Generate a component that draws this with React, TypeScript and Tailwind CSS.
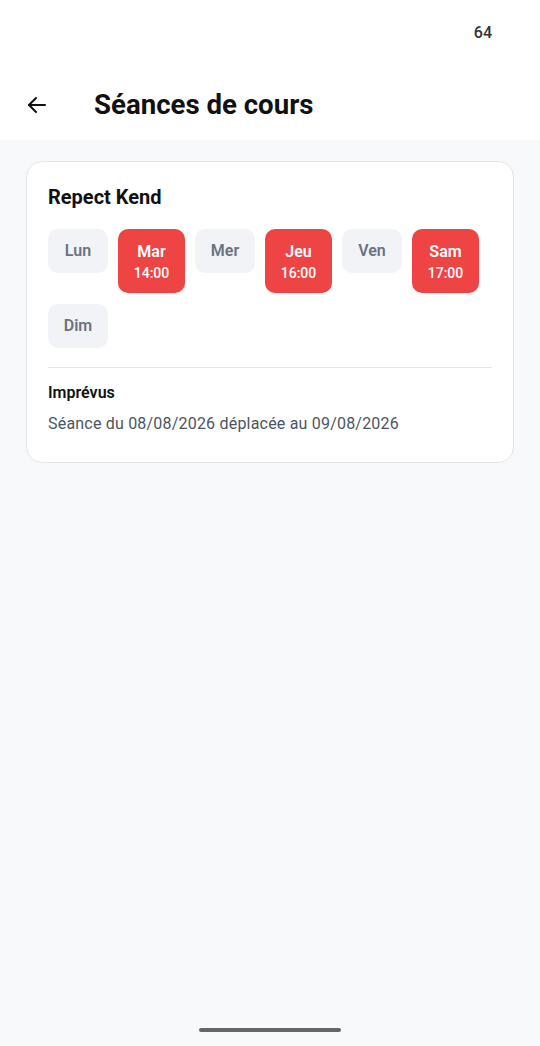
import React from 'react';

type Day = { label: string; time?: string };

const days: Day[] = [
  { label: 'Lun' },
  { label: 'Mar', time: '14:00' },
  { label: 'Mer' },
  { label: 'Jeu', time: '16:00' },
  { label: 'Ven' },
  { label: 'Sam', time: '17:00' },
  { label: 'Dim' },
];

const DayChip: React.FC<{ day: Day }> = ({ day }) => {
  if (day.time) {
    return (
      <div className="flex h-[64px] w-[67px] flex-col items-center justify-center rounded-[10px] bg-[#ef4444] pt-[2px] text-white">
        <span className="text-[16px] font-semibold leading-[20px]">{day.label}</span>
        <span className="mt-[2px] text-[14px] font-medium leading-[18px]">{day.time}</span>
      </div>
    );
  }
  return (
    <div className="flex h-[44px] w-[60px] items-center justify-center rounded-[10px] bg-[#f1f3f7] text-[16px] font-semibold text-[#6b7280]">
      {day.label}
    </div>
  );
};

export default function App() {
  return (
    <div className="flex min-h-[1046px] flex-col bg-[#f8f9fb] font-['Roboto',sans-serif]">
      {/* Header */}
      <div className="bg-white">
        <div className="flex h-[66px] items-center justify-end pr-[48px]">
          <span className="text-[16px] font-medium text-[#333]">64</span>
        </div>
        <div className="flex h-[74px] items-center pt-[4px]">
          <button className="ml-[24px] flex h-[26px] w-[26px] items-center justify-center text-[#111]">
            <svg width="24" height="24" viewBox="0 0 24 24" fill="none" stroke="currentColor" strokeWidth="2" strokeLinecap="round" strokeLinejoin="round">
              <path d="M20 12H4" />
              <path d="M11 5l-7 7 7 7" />
            </svg>
          </button>
          <h1 className="ml-[44px] text-[27.6px] font-bold text-[#111]">Séances de cours</h1>
        </div>
      </div>

      {/* Card */}
      <div className="px-[26px] pt-[21px]">
        <div className="rounded-[16px] border border-[#e3e5ea] bg-white px-[21px] pb-[28px] pt-[21px]">
          <h2 className="text-[20px] font-bold leading-[28px] text-[#111]">Repect Kend</h2>
          <div className="mt-[18px] flex flex-wrap items-start gap-x-[10px] gap-y-[11px]">
            {days.map((d) => (
              <DayChip key={d.label} day={d} />
            ))}
          </div>
          <div className="mt-[19px] border-t border-[#e3e5ea]" />
          <div className="mt-[15px] text-[16px] font-semibold leading-[20px] text-[#111]">Imprévus</div>
          <div className="mt-[11px] text-[16px] leading-[20px] tracking-[0.2px] text-[#4b5563]">
            Séance du 08/08/2026 déplacée au 09/08/2026
          </div>
        </div>
      </div>

      <div className="flex-1" />
      <div className="flex justify-center pb-[14px]">
        <div className="h-[4px] w-[142px] rounded-full bg-[#666]" />
      </div>
    </div>
  );
}
